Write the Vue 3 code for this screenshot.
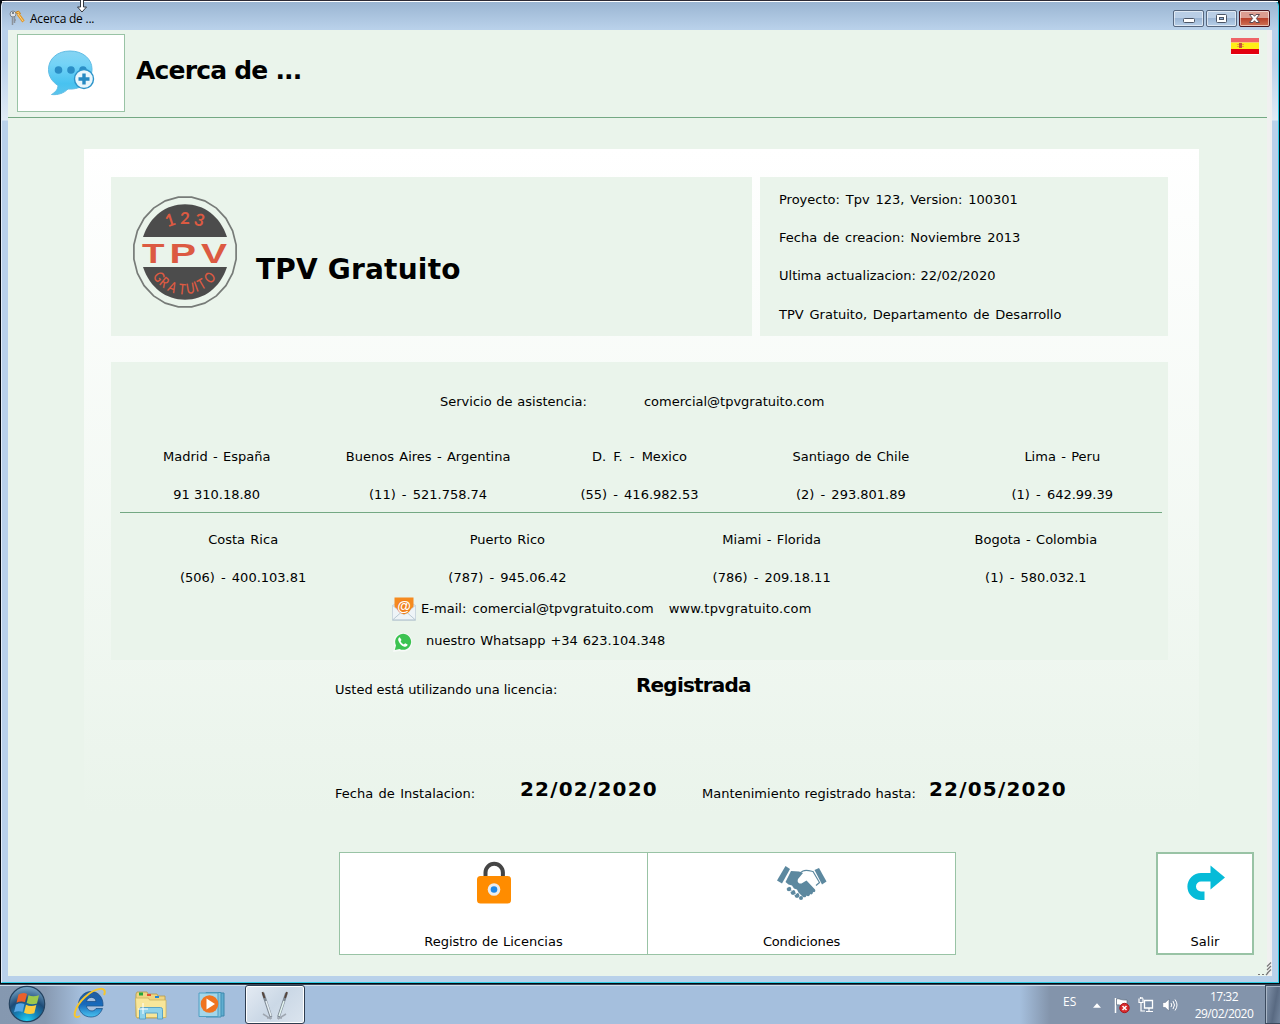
<script setup>
const projectInfo = [
  'Proyecto: Tpv 123, Version: 100301',
  'Fecha de creacion: Noviembre 2013',
  'Ultima actualizacion: 22/02/2020',
  'TPV Gratuito, Departamento de Desarrollo',
]

const mainOffices = [
  { city: 'Madrid - España', phone: '91 310.18.80' },
  { city: 'Buenos Aires - Argentina', phone: '(11) - 521.758.74' },
  { city: 'D. F. - Mexico', phone: '(55) - 416.982.53' },
  { city: 'Santiago de Chile', phone: '(2) - 293.801.89' },
  { city: 'Lima - Peru', phone: '(1) - 642.99.39' },
]

const otherOffices = [
  { city: 'Costa Rica', phone: '(506) - 400.103.81' },
  { city: 'Puerto Rico', phone: '(787) - 945.06.42' },
  { city: 'Miami - Florida', phone: '(786) - 209.18.11' },
  { city: 'Bogota - Colombia', phone: '(1) - 580.032.1' },
]

// Faceted outline of the round logo
const ring = Array.from({ length: 24 }, (_, i) => {
  const a = ((i + 0.5) * Math.PI) / 12
  return `${(52 + 51.5 * Math.cos(a)).toFixed(1)},${(56 + 55.3 * Math.sin(a)).toFixed(1)}`
}).join(' ')
</script>

<template>
  <div class="desktop">
    <div class="window">
      <header class="titlebar">
        <svg class="keys" width="16" height="16" viewBox="0 0 16 16">
          <circle cx="4" cy="4" r="3" fill="#dfe3e8" stroke="#7b8490" />
          <circle cx="4" cy="3" r="1" fill="#59636f" />
          <path d="M3.500 7v8M5.500 7v6M5.500 10h1.500" stroke="#8b929b" stroke-width="1.500" />
          <path d="M6.500 2.500l3-1.500 2 2.500-1.500 1z" fill="#f3c46b" stroke="#c98320" />
          <path d="M9 4l5.500 7.500" stroke="#e39a2b" stroke-width="3" />
          <path d="M9 4l5 7" stroke="#fbd58c" stroke-width="1" />
        </svg>
        <span class="caption">Acerca de ...</span>
        <div class="controls">
          <span class="ctl">
            <svg width="29" height="15" viewBox="0 0 29 15"><rect x="9.500" y="7.500" width="11" height="4" rx="1" fill="#fff" stroke="#4b5566" /></svg>
          </span>
          <span class="ctl">
            <svg width="29" height="15" viewBox="0 0 29 15"><rect x="9.500" y="3.500" width="10" height="8" rx="1" fill="#fff" stroke="#4b5566" /><rect x="12.500" y="6.500" width="4" height="2" fill="#8fb0d8" stroke="#4b5566" /></svg>
          </span>
          <span class="ctl close">
            <svg width="29" height="15" viewBox="0 0 29 15"><path d="M9.500 3.500h3.500l1.500 1.800L16 3.500h3.500L16.400 7.500l3.100 4H16l-1.500-1.800-1.500 1.800H9.500l3.100-4z" fill="#fff" stroke="#5a4a52" /></svg>
          </span>
        </div>
      </header>

      <main class="client">
        <div class="page">
          <div class="page-header">
            <div class="header-icon">
              <svg width="50" height="48" viewBox="0 0 50 48">
                <defs>
                  <linearGradient id="bubble" x1="0" y1="0" x2="0" y2="1">
                    <stop offset="0" stop-color="#86d4f2" />
                    <stop offset=".3" stop-color="#74d3f7" />
                    <stop offset=".75" stop-color="#48c2f0" />
                    <stop offset="1" stop-color="#5bc4ec" />
                  </linearGradient>
                </defs>
                <path d="M24 2C11 2 2.500 10 2.500 20.500c0 7 4 12.500 9.500 16 0 4-3 7-6.500 9 6.500.8 12.500-1.500 16.500-5.500 14 1 24-8 24-20C46 10 37 2 24 2z" fill="url(#bubble)" stroke="#62bde5" />
                <g fill="#2b8ec6"><circle cx="12.500" cy="21" r="3.800" /><circle cx="25" cy="21" r="3.800" /><circle cx="37" cy="21" r="3.800" /></g>
                <circle cx="38" cy="30" r="9.500" fill="#e9f6fc" stroke="#2c94ca" stroke-width="1.400" />
                <path d="M36.300 24.500h3.400v3.800h3.800v3.400h-3.800v3.800h-3.400v-3.800h-3.800v-3.400h3.800z" fill="#2689c2" />
              </svg>
            </div>
            <h1>Acerca de ...</h1>
            <svg class="flag" width="28" height="17" viewBox="0 0 28 17">
              <rect width="28" height="17" fill="#fff" />
              <rect y="0" width="28" height="4" fill="#ee6468" />
              <rect y="4" width="28" height="7" fill="#ffee16" />
              <rect y="4" width="28" height="1" fill="#f8c96c" />
              <rect y="11" width="28" height="5" fill="#e3000f" />
              <path d="M6 6h7v1H6zM6 8h7v1H6z" fill="#e6a332" /><path d="M8 5h3v5H8z" fill="#c7503b" />
            </svg>
          </div>

          <section class="panel">
            <div class="top-cards">
              <div class="card brand">
                <svg class="logo" width="105" height="113" viewBox="0 0 105 113">
                  <polygon :points="ring" fill="none" stroke="#777b78" stroke-width="1.700" />
                  <path d="M10 41C17 20 33 8.300 52 8.300S87 20 94 41z" fill="#4c4c4c" />
                  <path d="M10 71C17 92 33 103.700 52 103.700S87 92 94 71z" fill="#4c4c4c" />
                  <g class="logo-small">
                    <text transform="translate(37 23.500) rotate(-18)">1</text>
                    <text transform="translate(52 21)">2</text>
                    <text transform="translate(66.500 23.500) rotate(17)">3</text>
                  </g>
                  <g class="logo-big">
                    <text x="9" y="67" textLength="22.500" lengthAdjust="spacingAndGlyphs">T</text>
                    <text x="36.500" y="67" textLength="26.500" lengthAdjust="spacingAndGlyphs">P</text>
                    <text x="68" y="67" textLength="26" lengthAdjust="spacingAndGlyphs">V</text>
                  </g>
                  <g class="logo-arc">
                    <text transform="translate(26.300 80.500) rotate(54) scale(.82 1.050)">G</text>
                    <text transform="translate(31.500 86) rotate(39) scale(.82 1.050)">R</text>
                    <text transform="translate(39.500 90.800) rotate(24) scale(.82 1.050)">A</text>
                    <text transform="translate(49.300 92.800) rotate(6) scale(.82 1.050)">T</text>
                    <text transform="translate(57.300 92) rotate(-9) scale(.82 1.050)">U</text>
                    <text transform="translate(63 90.200) rotate(-20) scale(.82 1.050)">I</text>
                    <text transform="translate(68.500 87.800) rotate(-30) scale(.82 1.050)">T</text>
                    <text transform="translate(76.500 81.200) rotate(-46) scale(.82 1.050)">O</text>
                  </g>
                </svg>
                <h2>TPV Gratuito</h2>
              </div>
              <div class="card project">
                <p v-for="line in projectInfo" :key="line">{{ line }}</p>
              </div>
            </div>

            <div class="card contact">
              <div class="support"><span>Servicio de asistencia:</span><span>comercial@tpvgratuito.com</span></div>
              <div class="offices five">
                <div v-for="o in mainOffices" :key="o.city"><p>{{ o.city }}</p><p class="phone">{{ o.phone }}</p></div>
              </div>
              <div class="rule"></div>
              <div class="offices four">
                <div v-for="o in otherOffices" :key="o.city"><p>{{ o.city }}</p><p class="phone">{{ o.phone }}</p></div>
              </div>
              <div class="mail">
                <svg width="24" height="24" viewBox="0 0 24 24">
                  <path d="M.5 8.500L3 7h18l2.500 1.500V23H.5z" fill="#dfe9ee" stroke="#b9c8d1" stroke-width=".7" />
                  <path d="M2.500 .5h19v10L12 18 2.500 10.500z" fill="#f58a1f" />
                  <path d="M.5 8.500L12 18l11.500-9.500V23H.5z" fill="#eef4f7" stroke="#c3d1da" stroke-width=".7" />
                  <path d="M.8 22.800L9 15.500M23.200 22.800L15 15.500M.5 23h23" stroke="#b3c4cf" stroke-width=".9" />
                  <circle cx="12" cy="10" r="7" fill="#f0801c" />
                  <text x="12" y="14" class="at">@</text>
                </svg>
                <span class="email">E-mail: comercial@tpvgratuito.com</span>
                <span>www.tpvgratuito.com</span>
              </div>
              <div class="whatsapp">
                <svg width="20" height="20" viewBox="0 0 20 20">
                  <path d="M0 20l1.500-5.500A9.300 9.300 0 1 1 6.500 19z" fill="#f7faf8" />
                  <path d="M1.800 18l1.200-4.500A8 8 0 1 1 6.500 17z" fill="#3cc351" />
                  <path d="M6.800 5.200c-1.500.5-2 2-1.300 3.700 1.200 3 3.200 4.900 6 5.800 1.600.4 3-.5 3.100-2.100l-2.500-1.300-1.300 1.200c-1.600-.7-2.500-1.700-3.200-3.200l.9-1.200z" fill="#fff" />
                </svg>
                <span>nuestro Whatsapp +34 623.104.348</span>
              </div>
            </div>

            <div class="license"><span class="label">Usted está utilizando una licencia:</span><strong>Registrada</strong></div>
            <div class="dates">
              <span class="label">Fecha de Instalacion:</span><strong>22/02/2020</strong>
              <span class="label">Mantenimiento registrado hasta:</span><strong>22/05/2020</strong>
            </div>
          </section>

          <div class="actions">
            <button class="action">
              <svg width="36" height="44" viewBox="0 0 36 44">
                <path d="M9.500 18v-6.500a8.700 8.700 0 0 1 17.400 0V18" fill="none" stroke="#454545" stroke-width="4" />
                <rect x="1" y="15" width="34" height="27.500" rx="3.500" fill="#ff8c00" />
                <circle cx="18" cy="28.500" r="6.300" fill="#ececec" /><circle cx="18" cy="28.500" r="3.300" fill="#2088e5" />
              </svg>
              <span>Registro de Licencias</span>
            </button>
            <button class="action">
              <svg width="52" height="36" viewBox="0 0 52 36">
                <g fill="#5c889f">
                  <path d="M9.500 0L14 3 6 17.500 1 14.500z" /><path d="M43 2L38.500 4l7.500 14.500 4.500-3z" />
                  <path d="M15 5l8 .5 4 1.500-5 6c-1 3 .5 5 3.500 4.500l5-3 8.500 9c1 2-.5 3-2 2.500 0 2-1.500 3-3 2 0 2-2 3-3.500 1.500-.5 2-2.500 2.500-4 1l-4-4-1.500-3-3-1-2-3-3.500-1-3-2.500z" />
                  <circle cx="13" cy="23" r="2.300" /><circle cx="17" cy="26.500" r="2.400" /><circle cx="21" cy="29.500" r="2.400" /><circle cx="25" cy="32" r="2" />
                </g>
                <path d="M23 7.500l4-2.500c3-1.300 6-.4 10 .5l6.500 11-3.500 3" fill="none" stroke="#5c889f" stroke-width="1.200" />
                <path d="M11 22l2.500-2M15 25.500l2.500-2M19 29l2.500-2.500" stroke="#fff" stroke-width=".7" />
              </svg>
              <span>Condiciones</span>
            </button>
            <button class="action exit">
              <svg width="38" height="36" viewBox="0 0 38 36">
                <path d="M17.500 30.800H14a9.300 9.300 0 0 1 0-18.600h12" fill="none" stroke="#06bbd8" stroke-width="8.600" />
                <path d="M23.500 0.500L38 12.500 23.500 24.500z" fill="#06bbd8" />
              </svg>
              <span>Salir</span>
            </button>
          </div>
          <svg class="grip" width="14" height="14" viewBox="0 0 14 14">
            <path d="M9 4.500l4-4M9 8l4-4M9 11.500l4-4M0 12.500h2M4 12.500h2M8 13l2-2" stroke="#777" stroke-width="1.200" />
          </svg>
        </div>
      </main>
      <svg class="pointer" width="12" height="15" viewBox="0 0 12 15">
        <path d="M4.500-1v8H1.500L6 12l4.500-5H7.500v-8z" fill="#fff" stroke="#30363f" />
      </svg>
    </div>

    <footer class="taskbar">
      <div class="slot start">
        <svg width="38" height="38" viewBox="0 0 38 38">
          <defs>
            <radialGradient id="orb" cx=".5" cy="1" r=".95">
              <stop offset="0" stop-color="#23d6f5" /><stop offset=".35" stop-color="#1583b8" />
              <stop offset=".65" stop-color="#1e4b77" /><stop offset="1" stop-color="#6f9dbf" />
            </radialGradient>
          </defs>
          <circle cx="19" cy="19" r="17.700" fill="url(#orb)" stroke="#24425f" stroke-width="1.200" />
          <path d="M10.500 9.500c3-1.800 6-2 8.500-.6l-2 8.300c-2.800-1.300-5.500-1-8.500.5z" fill="#e9602b" />
          <path d="M20.500 10.200c3 1.500 6.500 1.500 10.500 0l-2 8.300c-3.500 1.300-7 1-10.300-.5z" fill="#9cc94c" />
          <path d="M8 19.500c3-1.600 5.700-1.800 8.500-.5l-2 8c-2.800-1.300-5.500-1-8.500.3z" fill="#56a5e4" />
          <path d="M18 19.700c3 1.500 6.500 1.700 10.300.3l-2 8.300c-3.500 1.300-7 1-10.300-.5z" fill="#fccd40" />
        </svg>
      </div>
      <div class="slot ie">
        <svg width="36" height="34" viewBox="0 0 36 34">
          <defs><linearGradient id="ie" x1="0" y1="0" x2="0" y2="1"><stop offset="0" stop-color="#235c9d" /><stop offset=".5" stop-color="#1769bb" /><stop offset="1" stop-color="#49c2ef" /></linearGradient></defs>
          <path d="M31 19H14.500c.5 5.500 7.500 6.500 9.500 2.500h6.500C28 28 23.500 30 19 30 11.500 30 6.500 24.500 6.500 17.500S12 4.500 19 4.500 31.500 10 31 19zM14.500 14.500h9.500c-.5-5.500-8.500-5.500-9.500 0z" fill="url(#ie)" stroke="#164b82" stroke-width=".7" />
          <path d="M8 29C-1 34 2 20 13 10S36-1 32 8" fill="none" stroke="#f6c62d" stroke-width="2" />
        </svg>
      </div>
      <div class="slot explorer">
        <svg width="34" height="32" viewBox="0 0 34 32">
          <path d="M2 4l1-2h10l1 2h9l1 2h7v21l-2 1H3l-1-2z" fill="#efd583" stroke="#b89b46" stroke-width=".8" />
          <path d="M5 2.500h4v3H5z" fill="#22a63b" /><path d="M13 4h4v2h-4z" fill="#e64d32" /><path d="M21 6h4v2h-4z" fill="#2487d5" />
          <path d="M1.500 8h13l1 2H32v17.500H2.500z" fill="#f8e69a" stroke="#cbb25d" stroke-width=".8" />
          <path d="M5.500 29v-9.500q0-2 2-2h19q2 0 2 2V29h-5v-6h-12v6z" fill="#8fd2ea" stroke="#5aa4c7" />
          <path d="M9 13v11M4 19h10" stroke="#fff" stroke-width="1" />
        </svg>
      </div>
      <div class="slot media">
        <svg width="30" height="28" viewBox="0 0 30 28">
          <path d="M12 2h14v23H12z" fill="#5faed0" stroke="#3e87ab" /><path d="M8 1.500h15V26H8z" fill="#86c5df" stroke="#4290b5" /><path d="M1 2h19v23.500H1z" fill="#a4d6e9" stroke="#4f9fc3" />
          <circle cx="11.500" cy="13" r="8.800" fill="#ef7421" /><path d="M8.500 7.500l8.500 5.500-8.500 5.500z" fill="#fff" />
        </svg>
      </div>
      <div class="running">
        <svg width="34" height="32" viewBox="0 0 34 32">
          <path d="M5 24l8 5M28 24l-8 5M9 28h5M24 28h-5" stroke="#9fa7b1" stroke-width="1.500" />
          <path d="M5 3l8 24" stroke="#7d8792" stroke-width="2.800" /><path d="M8 11l5 15" stroke="#e4edf2" stroke-width="1.500" />
          <path d="M28.500 3l-8 24" stroke="#7d8792" stroke-width="2.800" /><path d="M26 11l-5 15" stroke="#e2f3ef" stroke-width="1.500" />
          <path d="M4.500 2l2 6M29 2l-2 6" stroke="#55443c" stroke-width="1.800" />
        </svg>
      </div>
      <div class="tray">
        <span class="lang">ES</span>
        <svg class="arrow" width="8" height="5" viewBox="0 0 8 5"><path d="M0 4.700L4 .3l4 4.400z" fill="#fff" /></svg>
        <svg class="action-center" width="16" height="17" viewBox="0 0 16 17">
          <path d="M1.500 1v15" stroke="#fff" stroke-width="1.500" /><path d="M2.500 2c3-1 4 1.500 10.500 1v6c-6 .5-7-2-10.500-1z" fill="#fff" stroke="#516174" stroke-width=".6" />
          <circle cx="10.500" cy="11" r="4.700" fill="#d9292c" stroke="#a9171b" /><path d="M8.500 9l4 4M12.500 9l-4 4" stroke="#fff" stroke-width="1.500" />
        </svg>
        <svg class="network" width="16" height="16" viewBox="0 0 16 16">
          <path d="M6.500 3.500h8v7.500h-8z" fill="#7c90aa" stroke="#fff" stroke-width="1.300" /><path d="M8 14.500h7M11 11v3M1 1.500v4h4v-4M2.500 0v2M4 0v2M3 6v8h4" fill="none" stroke="#fff" stroke-width="1.200" />
        </svg>
        <svg class="sound" width="16" height="14" viewBox="0 0 16 14">
          <path d="M.8 4.500h2.500L7 1v12L3.300 9.500H.8z" fill="#fff" stroke="#5b6b81" stroke-width=".5" /><path d="M9 5q1.500 2 0 4M11 3q3 4 0 8M13 1.500q4 5.500 0 11" fill="none" stroke="#fff" />
        </svg>
        <div class="clock"><span>17:32</span><span>29/02/2020</span></div>
        <div class="show-desktop"></div>
      </div>
    </footer>
  </div>
</template>

<style>
body { background: #000; overflow: hidden; }
</style>

<style scoped>
* { box-sizing: border-box; }
p, h1, h2 { margin: 0; font-weight: normal; }
svg { display: block; flex: none; }
.desktop { width: 1280px; height: 1024px; display: flex; flex-direction: column; background: #050a10; font-family: "DejaVu Sans", Verdana, sans-serif; font-size: 13px; color: #000; }
.window { position: relative; height: 983px; flex: none; margin: 0 1px; border-top: 1px solid #2c2a35; border-right: 1px solid #2ccbe4; border-bottom: 1px solid #2ccbe4; border-left: 1px solid #e3edf8; border-radius: 6px 6px 0 0; background: linear-gradient(180deg, #99b4d1 0, #b9d1ea 28px, #bad1ea 60px, #e0ebf6 119px, #b9d1ea 120px); padding: 0 6px 6px; }
.titlebar { height: 29px; margin: 0 -6px; padding-left: 7px; display: flex; box-shadow: inset 0 2px 0 -1px #fff; }
.keys { margin-top: 9px; }
.caption { font-family: "Open Sans", "Noto Sans", sans-serif; font-size: 12px; line-height: 16px; margin: 10px 0 0 5px; white-space: nowrap; letter-spacing: -.22px; }
.controls { margin: 9px 8px 0 auto; display: flex; gap: 2px; }
.ctl { width: 31px; height: 17px; border: 1px solid #56677f; border-radius: 2px; box-shadow: inset 0 0 0 1px rgba(255,255,255,.55); background: linear-gradient(#b9cee6 50%, #9bb6d5 50%, #b7cfe8); }
.close { border-color: #4b1620; background: linear-gradient(#dc9d91 50%, #b9412b 50%, #cf7256); }
.client { height: 946px; background: #f0f0f0; padding-right: 5px; }
.page { height: 946px; background: #eaf4eb; position: relative; }
.page-header { height: 88px; border-bottom: 1px solid #74a883; display: flex; padding: 4px 0 0 9px; }
.header-icon { width: 108px; height: 78px; border: 1px solid #99c3a5; background: #fff; padding: 14px 0 0 28px; }
h1 { font-size: 25px; font-weight: bold; line-height: 32px; margin: 21px 0 0 11px; letter-spacing: -.8px; white-space: nowrap; }
.flag { margin: 4px 8px 0 auto; }
.panel { width: 1115px; height: 703px; margin: 31px 0 0 76px; padding: 28px 31px 0 27px; background: linear-gradient(#fff 0, #eaf4eb 665px); }
.card { background: #eaf4eb; }
.top-cards { display: flex; gap: 8px; height: 159px; }
.brand { width: 641px; display: flex; padding: 19px 0 0 22px; }
.logo-small, .logo-big, .logo-arc { fill: #dc5a42; text-anchor: middle; }
.logo-small { font: bold 17px "Lato", sans-serif; }
.logo-small text, .logo-arc text { dominant-baseline: central; }
.logo-big { font: bold 28px "Liberation Sans", sans-serif; text-anchor: start; }
.logo-arc { font: 600 14px "Lato", sans-serif; }
h2 { font-size: 28px; font-weight: bold; line-height: 36px; margin: 56px 0 0 18px; letter-spacing: .2px; white-space: nowrap; }
.project { width: 408px; padding: 4px 0 0 19px; word-spacing: 1.700px; }
.project p { height: 38.200px; line-height: 38px; white-space: nowrap; }
.project p:nth-child(3) { word-spacing: .5px; }
.contact { height: 298px; margin-top: 26px; }
.support { height: 76px; display: flex; gap: 57px; padding: 30px 0 0 329px; line-height: 20px; word-spacing: .6px; }
.offices { display: grid; text-align: center; line-height: 38px; white-space: nowrap; word-spacing: 1.200px; }
.offices .phone { word-spacing: 2px; }
.five { grid-template-columns: repeat(5, 1fr); height: 74px; }
.five > div:first-child .phone { word-spacing: 0; }
.five > div:nth-child(3) p:first-child { word-spacing: 3px; }
.four { grid-template-columns: repeat(4, 1fr); height: 83px; padding-top: 8px; }
.rule { height: 1px; background: #74a883; margin: 0 6px 0 9px; }
.mail { height: 26px; display: flex; padding: 1px 0 0 281px; }
.mail span { line-height: 24px; margin-left: 15px; white-space: nowrap; letter-spacing: .2px; }
.mail .email { margin-left: 5px; letter-spacing: .03px; word-spacing: 2px; }
.at { font: bold 14px "Liberation Sans", sans-serif; fill: #fff; text-anchor: middle; }
.whatsapp { display: flex; padding: 10px 0 0 282px; }
.whatsapp span { line-height: 20px; margin: -1px 0 0 13px; white-space: nowrap; word-spacing: .7px; }
.license, .dates { display: flex; padding-left: 224px; line-height: 24px; height: 104px; padding-top: 13px; white-space: nowrap; }
.label { margin-top: 5px; }
strong { font-size: 20px; }
.license .label { width: 301px; word-spacing: -.3px; }
.license strong { letter-spacing: -.8px; }
.dates strong { letter-spacing: 1.200px; width: 182px; }
.dates .label:first-child { width: 185px; word-spacing: 1.300px; }
.dates .label:nth-child(3) { width: 227px; word-spacing: .5px; }
.actions { display: flex; padding-left: 331px; }
.action { font: inherit; color: inherit; width: 309px; height: 103px; background: #fff; border: 1px solid #99c3a5; padding: 8px 0 0; display: flex; flex-direction: column; align-items: center; }
.action + .action { margin-left: -1px; }
.action span { margin-top: auto; line-height: 18px; margin-bottom: 3px; word-spacing: .5px; }
.action:nth-child(2) svg { margin-top: 5px; }
.action:nth-child(2) span { letter-spacing: -.15px; }
.action + .exit { width: 98px; border-width: 2px; margin-left: 200px; padding-top: 11px; }
.exit svg { margin-left: 2px; }
.exit span { margin-bottom: 2px; }
.grip { position: absolute; right: -5px; bottom: 0; }
.pointer { position: absolute; left: 74px; top: -1px; }
.taskbar { height: 40px; margin-top: 1px; flex: none; display: flex; border-top: 1px solid #39485b; box-shadow: inset 0 1px #d2dfec; background: linear-gradient(90deg, #8598b0 0, #8799b1 45px, #a5bfdd 82px, #a5bfdd 1020px, #8394ab 1050px); }
.start { width: 72px; padding: 0 0 0 8px; }
.ie { width: 62px; padding-top: 2px; }
.explorer { width: 63px; padding-top: 5px; }
.media { width: 48px; padding: 6px 0 0 1px; }
.running { width: 60px; height: 39px; border: 1px solid #2e3d50; border-radius: 3px; box-shadow: inset 0 0 0 1px #fff; background: linear-gradient(135deg, #e4ebf3, #cbd8e6 50%, #dbe4ee); padding: 4px 0 0 12px; }
.tray { margin-left: auto; display: flex; color: #fff; font: 12px/17px "Open Sans", "Noto Sans", sans-serif; }
.lang { width: 30px; padding-top: 8px; }
.arrow { margin-top: 18px; }
.action-center { margin: 12px 0 0 13px; }
.network { margin: 12px 0 0 8px; }
.sound { margin: 13px 0 0 8px; }
.clock { width: 74px; margin: 3px 4px 0 9px; display: flex; flex-direction: column; align-items: center; letter-spacing: -.5px; }
.show-desktop { width: 15px; height: 39px; border: 1px solid #3b4a5e; border-right: 0; box-shadow: inset 1px 1px #a9b6c6; background: linear-gradient(100deg, #8394ab, #596a82 60%, #74869e); }
</style>
